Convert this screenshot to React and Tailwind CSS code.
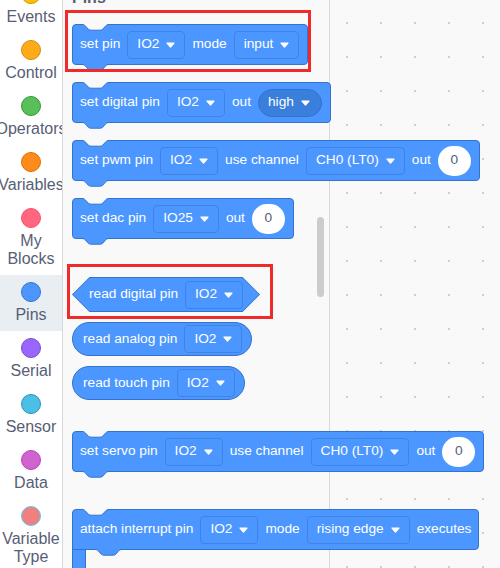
import React from "react";

const cats = [
  { name: "Events", dot: "bg-[#ffbf00] border-[#cc9900]" },
  { name: "Control", dot: "bg-[#ffab19] border-[#cf8b17]" },
  { name: "Operators", dot: "bg-[#59c059] border-[#389438]" },
  { name: "Variables", dot: "bg-[#ff8c1a] border-[#db6e00]" },
  { name: ["My", "Blocks"], dot: "bg-[#ff6680] border-[#ff4d6a]" },
  { name: "Pins", dot: "bg-[#4c97ff] border-[#3373cc]", selected: true },
  { name: "Serial", dot: "bg-[#9966ff] border-[#774dcb]" },
  { name: "Sensor", dot: "bg-[#4cbfe6] border-[#2e8eb8]" },
  { name: "Data", dot: "bg-[#cf63cf] border-[#bd42bd]" },
  { name: ["Variable", "Type"], dot: "bg-[#f08080] border-[#5cc6ec]" },
];

function Category({ c }) {
  const twoLine = Array.isArray(c.name);
  return (
    <div
      className={`flex shrink-0 flex-col items-center pt-[7px] ${twoLine ? "h-[74px]" : "h-[56px]"} ${
        c.selected ? "bg-[#e9eef2]" : ""
      }`}
    >
      <div className={`h-[20px] w-[20px] shrink-0 rounded-full border ${c.dot}`}></div>
      <div className="mt-[4px] flex flex-col items-center whitespace-nowrap text-[16px] leading-[18px] text-[#575e75]">
        {twoLine ? c.name.map((n) => <span key={n}>{n}</span>) : <span>{c.name}</span>}
      </div>
    </div>
  );
}

const notchLine =
  "M10 0.5 C11.8 0.5 12.7 1.2 13.5 2.1 L16.1 5 C16.8 5.8 17.6 6.2 19 6.2 H28 C29.4 6.2 30.2 5.8 30.9 5 L33.5 2.1 C34.3 1.2 35.2 0.5 37 0.5";

function TopNotch() {
  return (
    <svg className="absolute -left-px -top-px" width="40" height="8" viewBox="0 0 40 8">
      <path d={notchLine + " L37 0 L10 0 Z"} fill="#f9f9f9" />
      <path d={notchLine} fill="none" stroke="#3373cc" strokeWidth="1" />
    </svg>
  );
}

function BottomTab({ className = "-left-px" }) {
  return (
    <svg className={`absolute top-full ${className}`} width="40" height="8" viewBox="0 0 40 8">
      <path d={notchLine + " L37 0 L10 0 Z"} fill="#4c97ff" />
      <path d={notchLine} fill="none" stroke="#3373cc" strokeWidth="1" />
    </svg>
  );
}

const Arrow = () => (
  <svg width="9" height="6" viewBox="0 0 9 6">
    <path d="M1 1 H8 L4.5 5 Z" fill="white" stroke="white" strokeWidth="1.2" strokeLinejoin="round" />
  </svg>
);

function Dd({ children }) {
  return (
    <div className="flex h-[28px] shrink-0 items-center gap-[7px] rounded-[4px] border border-[#3f84e5] pl-[9px] pr-[9px]">
      <span>{children}</span>
      <Arrow />
    </div>
  );
}

function RoundDd({ children }) {
  return (
    <div className="flex h-[28px] shrink-0 items-center gap-[7px] rounded-full border border-[#3373cc] bg-[#3b7fdc] pl-[9px] pr-[11px]">
      <span>{children}</span>
      <Arrow />
    </div>
  );
}

const Num = () => (
  <div className="flex h-[30px] w-[33px] shrink-0 items-center justify-center rounded-full bg-white text-[#575e75]">
    0
  </div>
);

function Stack({ children, className = "" }) {
  return (
    <div
      className={`relative flex h-[41px] w-fit shrink-0 items-center gap-[7px] whitespace-nowrap rounded-[4px] border border-[#3373cc] bg-[#4c97ff] pl-[7px] pr-[8px] text-white ${className}`}
    >
      <TopNotch />
      {children}
      <BottomTab />
    </div>
  );
}

function Reporter({ children, className = "" }) {
  return (
    <div
      className={`flex h-[34px] w-fit shrink-0 items-center gap-[7px] whitespace-nowrap rounded-full border border-[#3373cc] bg-[#4c97ff] pl-[10px] pr-[9px] text-white ${className}`}
    >
      {children}
    </div>
  );
}

function Bool({ children, className = "" }) {
  return (
    <div
      className={`h-[35px] w-fit shrink-0 bg-[#3373cc] p-px [clip-path:polygon(17.5px_0,calc(100%_-_17.5px)_0,100%_50%,calc(100%_-_17.5px)_100%,17.5px_100%,0_50%)] ${className}`}
    >
      <div className="flex h-full items-center gap-[7px] whitespace-nowrap bg-[#4c97ff] pl-[16px] pr-[16px] text-white [clip-path:polygon(16.5px_0,calc(100%_-_16.5px)_0,100%_50%,calc(100%_-_16.5px)_100%,16.5px_100%,0_50%)]">
        {children}
      </div>
    </div>
  );
}

export default function App() {
  return (
    <div className="flex h-[568px] w-[500px] overflow-hidden bg-white font-['Liberation_Sans',Arial,sans-serif]">
      {/* categories */}
      <div className="w-[63px] shrink-0 overflow-hidden border-r border-[#d9d9d9] bg-white">
        <div className="-mt-[23px] flex flex-col">
          {cats.map((c) => (
            <Category key={String(c.name)} c={c} />
          ))}
        </div>
      </div>

      {/* flyout */}
      <div className="relative z-10 w-[267px] shrink-0 border-r border-[#d9d9d9] bg-[#f9f9f9]">
        <div className="flex flex-col items-start pl-[9px] text-[13.7px]">
          <div className="-mt-[12px] h-[20px] text-[16px] font-bold leading-[20px] text-[#575e75]">Pins</div>

          <Stack className="mt-[16px]">
            <span>set pin</span>
            <Dd>IO2</Dd>
            <span>mode</span>
            <Dd>input</Dd>
          </Stack>

          <Stack className="mt-[17px] pr-[5px]">
            <span>set digital pin</span>
            <Dd>IO2</Dd>
            <span>out</span>
            <RoundDd>high</RoundDd>
          </Stack>

          <Stack className="mt-[17px]">
            <span>set pwm pin</span>
            <Dd>IO2</Dd>
            <span>use channel</span>
            <Dd>CH0 (LT0)</Dd>
            <span>out</span>
            <Num />
          </Stack>

          <Stack className="mt-[17px]">
            <span>set dac pin</span>
            <Dd>IO25</Dd>
            <span>out</span>
            <Num />
          </Stack>

          <Bool className="mt-[38px]">
            <span>read digital pin</span>
            <Dd>IO2</Dd>
          </Bool>

          <Reporter className="mt-[10px]">
            <span>read analog pin</span>
            <Dd>IO2</Dd>
          </Reporter>

          <Reporter className="mt-[10px]">
            <span>read touch pin</span>
            <Dd>IO2</Dd>
          </Reporter>

          <Stack className="mt-[31px]">
            <span>set servo pin</span>
            <Dd>IO2</Dd>
            <span>use channel</span>
            <Dd>CH0 (LT0)</Dd>
            <span>out</span>
            <Num />
          </Stack>

          <div className="mt-[37px] flex flex-col">
            <div className="relative flex h-[41px] w-fit items-center gap-[7px] whitespace-nowrap rounded-[4px] rounded-bl-none border border-[#3373cc] bg-[#4c97ff] pl-[7px] pr-[7px] text-white">
              <TopNotch />
              <span>attach interrupt pin</span>
              <Dd>IO2</Dd>
              <span>mode</span>
              <Dd>rising edge</Dd>
              <span>executes</span>
              <BottomTab className="left-[12px]" />
            </div>
            <div className="-mt-px h-[40px] w-[14px] border-x border-[#3373cc] bg-[#4c97ff]"></div>
          </div>
        </div>

        {/* scrollbar */}
        <div className="absolute left-[254px] top-[217px] h-[80px] w-[7px] rounded-full bg-[#cccccc]"></div>

        {/* highlight boxes */}
        <div className="absolute left-[2px] top-[10px] h-[62px] w-[246px] border-[3px] border-[#ee2a2a]"></div>
        <div className="absolute left-[4px] top-[264px] h-[55px] w-[206px] border-[3px] border-[#ee2a2a]"></div>
      </div>

      {/* workspace */}
      <div className="flex-1 bg-[#f9f9f9] bg-[radial-gradient(circle,#cfcfcf_1px,transparent_1.5px)] bg-[length:34px_34px] bg-[position:0_6px]"></div>
    </div>
  );
}
